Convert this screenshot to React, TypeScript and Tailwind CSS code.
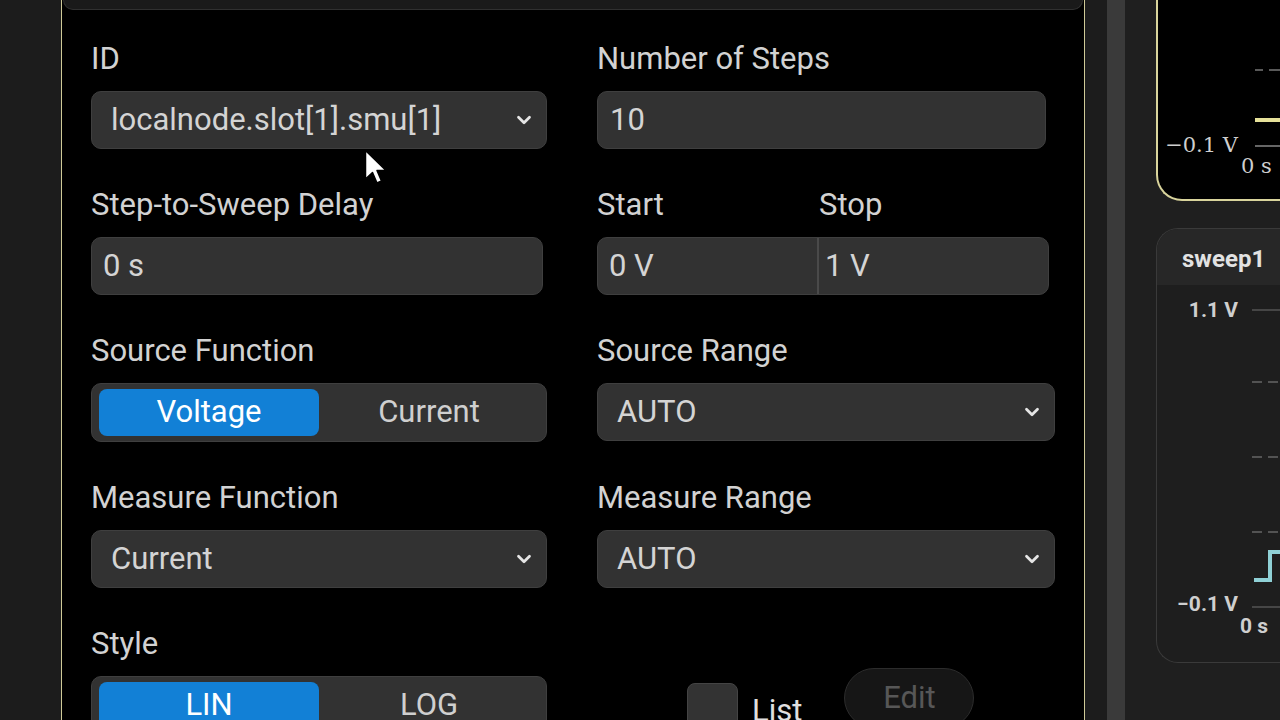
import { ChevronDown } from 'lucide-react';

const font = { fontFamily: 'Roboto, "Liberation Sans", sans-serif' };

function Label({ children }: { children: React.ReactNode }) {
  return <div className="h-[36px] text-[31px] leading-[36px] text-[#d2d2d2]">{children}</div>;
}

function Select({ value, className = '' }: { value: string; className?: string }) {
  return (
    <div
      className={`flex h-[58px] items-center justify-between rounded-[10px] border border-[#3f3f3f] bg-[#323232] pl-[19px] pr-[11px] text-[31px] text-[#d4d4d4] ${className}`}
    >
      <span>{value}</span>
      <ChevronDown className="h-[22px] w-[22px] text-[#e6e6e6]" strokeWidth={3} />
    </div>
  );
}

function Input({ value, className = '' }: { value: string; className?: string }) {
  return (
    <div
      className={`flex h-[58px] items-center rounded-[10px] border border-[#3f3f3f] bg-[#323232] px-[11px] text-[31px] text-[#d4d4d4] ${className}`}
    >
      {value}
    </div>
  );
}

function Toggle({ options }: { options: string[] }) {
  return (
    <div className="flex h-[59px] w-[456px] rounded-[10px] border border-[#3f3f3f] bg-[#323232] px-[7px] py-[5px]">
      {options.map((o, i) => (
        <div
          key={o}
          className={`flex flex-1 items-center justify-center rounded-[8px] text-[31px] ${
            i === 0 ? 'bg-[#1280d6] text-white' : 'text-[#cfcfcf]'
          }`}
        >
          {o}
        </div>
      ))}
    </div>
  );
}

function Field({ label, children }: { label: string; children: React.ReactNode }) {
  return (
    <div className="flex flex-col gap-[14px]">
      <Label>{label}</Label>
      {children}
    </div>
  );
}

function Cursor() {
  return (
    <svg className="absolute left-[364px] top-[149px]" width="24" height="38" viewBox="0 0 24 38">
      <path
        d="M1.5 1.5 L1.5 30 L8.5 23.5 L13 34 L17.5 32 L13 21.5 L22 21.5 Z"
        fill="#ffffff"
        stroke="#000000"
        strokeWidth="1.5"
        strokeLinejoin="round"
      />
    </svg>
  );
}

function TopChart() {
  return (
    <svg width="200" height="200" className="block">
      <line x1="97" y1="70" x2="105" y2="70" stroke="#777" strokeWidth="1.5" />
      <line x1="111" y1="70" x2="123" y2="70" stroke="#777" strokeWidth="1.5" />
      <line x1="97" y1="120" x2="200" y2="120" stroke="#e6e19a" strokeWidth="4" />
      <line x1="97" y1="146" x2="200" y2="146" stroke="#888" strokeWidth="1.5" />
      <text x="80" y="152" textAnchor="end" fontSize="21" fill="#cfcfcf" fontFamily='"DejaVu Serif", serif'>
        −0.1 V
      </text>
      <text x="83" y="173" fontSize="21" fill="#cfcfcf" fontFamily='"DejaVu Serif", serif'>
        0 s
      </text>
    </svg>
  );
}

function SweepChart() {
  return (
    <svg width="200" height="378" className="block">
      <line x1="95" y1="25" x2="200" y2="25" stroke="#555" strokeWidth="1.5" />
      {[97, 172, 247].map((y) => (
        <g key={y}>
          <line x1="95" y1={y} x2="105" y2={y} stroke="#666" strokeWidth="1.5" />
          <line x1="111" y1={y} x2="121" y2={y} stroke="#666" strokeWidth="1.5" />
        </g>
      ))}
      <path d="M97 295 L113 295 L113 267 L200 267" fill="none" stroke="#8fd0d6" strokeWidth="4" />
      <line x1="95" y1="322" x2="200" y2="322" stroke="#555" strokeWidth="1.5" />
      <text x="81" y="32" textAnchor="end" fontSize="21" fontWeight="700" fill="#cfcfcf" fontFamily="Roboto, sans-serif">
        1.1 V
      </text>
      <text x="81" y="326" textAnchor="end" fontSize="21" fontWeight="700" fill="#cfcfcf" fontFamily="Roboto, sans-serif">
        −0.1 V
      </text>
      <text x="83" y="348" fontSize="21" fontWeight="700" fill="#cfcfcf" fontFamily="Roboto, sans-serif">
        0 s
      </text>
    </svg>
  );
}

export default function App() {
  return (
    <div className="relative flex h-[720px] w-[1280px] overflow-hidden bg-[#1c1c1c]" style={font}>
      <div className="w-[61px] shrink-0" />

      {/* settings panel */}
      <div className="w-[1024px] shrink-0 border-x border-[#cfca98] bg-black">
        <div className="mx-[1px] h-[10px] rounded-b-[10px] border border-t-0 border-[#303030] bg-[#1a1a1a]" />
        <div className="grid grid-cols-[456px_458px] gap-x-[50px] gap-y-[38px] px-[29px] pt-[31px]">
          <Field label="ID">
            <Select value="localnode.slot[1].smu[1]" />
          </Field>
          <Field label="Number of Steps">
            <Input value="10" className="w-[449px] pl-[12px]" />
          </Field>

          <Field label="Step-to-Sweep Delay">
            <Input value="0 s" className="w-[452px]" />
          </Field>
          <div className="flex flex-col gap-[14px]">
            <div className="flex">
              <div className="w-[222px]">
                <Label>Start</Label>
              </div>
              <Label>Stop</Label>
            </div>
            <div className="flex h-[58px] w-[452px] rounded-[10px] border border-[#3f3f3f] bg-[#323232] text-[31px] text-[#d4d4d4]">
              <div className="flex w-[221px] items-center border-r-2 border-[#4a4a4a] pl-[11px]">0 V</div>
              <div className="flex flex-1 items-center pl-[6px]">1 V</div>
            </div>
          </div>

          <Field label="Source Function">
            <Toggle options={['Voltage', 'Current']} />
          </Field>
          <Field label="Source Range">
            <Select value="AUTO" />
          </Field>

          <Field label="Measure Function">
            <Select value="Current" />
          </Field>
          <Field label="Measure Range">
            <Select value="AUTO" />
          </Field>

          <Field label="Style">
            <Toggle options={['LIN', 'LOG']} />
          </Field>
          <div className="flex items-start pl-[90px] pt-[42px]">
            <div className="mt-[15px] h-[52px] w-[51px] shrink-0 rounded-[8px] border border-[#444] bg-[#333]" />
            <div className="ml-[14px] mt-[25px] text-[31px] leading-[36px] text-[#e0e0e0]">List</div>
            <div className="ml-[42px] flex h-[60px] w-[130px] items-center justify-center rounded-full border border-[#2c2c2c] bg-[#161616] text-[31px] text-[#575757]">
              Edit
            </div>
          </div>
        </div>
      </div>

      {/* right side: scrollbar and plots */}
      <div className="flex shrink-0">
        <div className="w-[22px]" />
        <div className="w-[18px] bg-[#3a3a3a]" />
        <div className="w-[31px] bg-[#1f1f1f]" />
        <div className="flex w-[200px] flex-col gap-[27px] bg-[#1f1f1f]">
          <div className="h-[201px] overflow-hidden rounded-bl-[26px] border-b-2 border-l-2 border-[#d9d49c] bg-black">
            <TopChart />
          </div>
          <div className="h-[435px] overflow-hidden rounded-tl-[22px] rounded-bl-[22px] border border-r-0 border-[#3a3a3a] bg-[#1e1e1e]">
            <div className="flex h-[56px] items-center bg-[#272727] pl-[25px] pt-[4px] text-[24px] font-bold text-[#e2e2e2]">
              sweep1
            </div>
            <SweepChart />
          </div>
        </div>
      </div>

      <Cursor />
    </div>
  );
}
